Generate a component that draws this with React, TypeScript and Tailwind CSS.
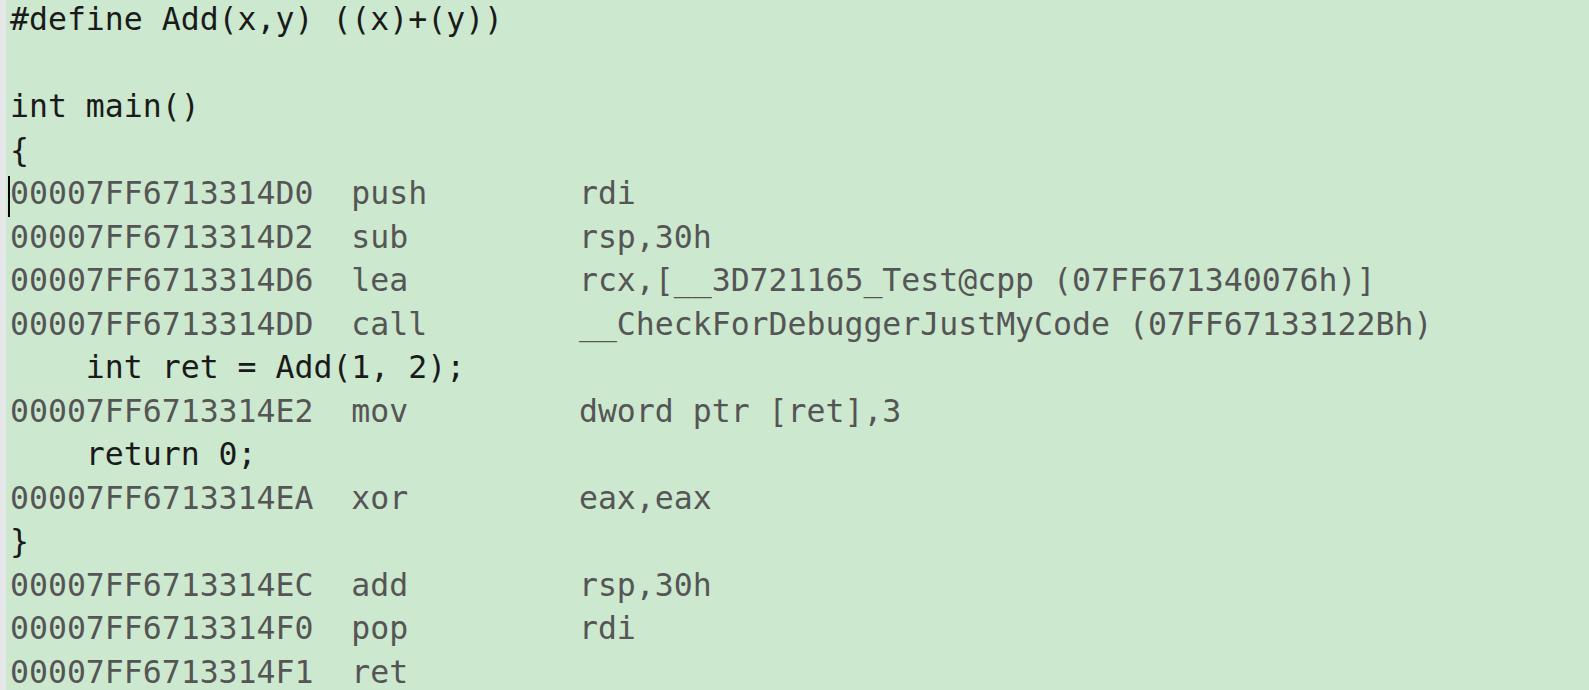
import React from "react";

type Line = { kind: "src" | "asm" | "blank"; text?: string; addr?: string; op?: string; args?: string; cursor?: boolean };

const lines: Line[] = [
  { kind: "src", text: "#define Add(x,y) ((x)+(y))" },
  { kind: "blank" },
  { kind: "src", text: "int main()" },
  { kind: "src", text: "{" },
  { kind: "asm", addr: "00007FF6713314D0", op: "push", args: "rdi", cursor: true },
  { kind: "asm", addr: "00007FF6713314D2", op: "sub", args: "rsp,30h" },
  { kind: "asm", addr: "00007FF6713314D6", op: "lea", args: "rcx,[__3D721165_Test@cpp (07FF671340076h)]" },
  { kind: "asm", addr: "00007FF6713314DD", op: "call", args: "__CheckForDebuggerJustMyCode (07FF67133122Bh)" },
  { kind: "src", text: "    int ret = Add(1, 2);" },
  { kind: "asm", addr: "00007FF6713314E2", op: "mov", args: "dword ptr [ret],3" },
  { kind: "src", text: "    return 0;" },
  { kind: "asm", addr: "00007FF6713314EA", op: "xor", args: "eax,eax" },
  { kind: "src", text: "}" },
  { kind: "asm", addr: "00007FF6713314EC", op: "add", args: "rsp,30h" },
  { kind: "asm", addr: "00007FF6713314F0", op: "pop", args: "rdi" },
  { kind: "asm", addr: "00007FF6713314F1", op: "ret", args: "" },
];

function pad(s: string, n: number) {
  return s + " ".repeat(Math.max(0, n - s.length));
}

export default function App() {
  return (
    <div className="flex h-[690px] w-[1589px] overflow-hidden bg-[#cce8cf]">
      <div className="w-[6px] shrink-0 bg-[#e6e7e8]" />
      <div
        className="flex-1 pl-[4px] pt-0 -mt-[2px] whitespace-pre text-[31.5px] leading-[43.5px]"
        style={{ fontFamily: '"DejaVu Sans Mono", "Liberation Mono", monospace' }}
      >
        {lines.map((l, i) => {
          if (l.kind === "blank") return <div key={i}>&nbsp;</div>;
          if (l.kind === "src")
            return (
              <div key={i} className="text-[#1a1a1a]">
                {l.text}
              </div>
            );
          return (
            <div key={i} className="relative text-[#555555]">
              {l.cursor && <span className="absolute left-[-2px] top-[4px] h-[41px] w-[2px] bg-black" />}
              {pad(l.addr!, 18) + pad(l.op!, 12) + l.args}
            </div>
          );
        })}
      </div>
    </div>
  );
}
